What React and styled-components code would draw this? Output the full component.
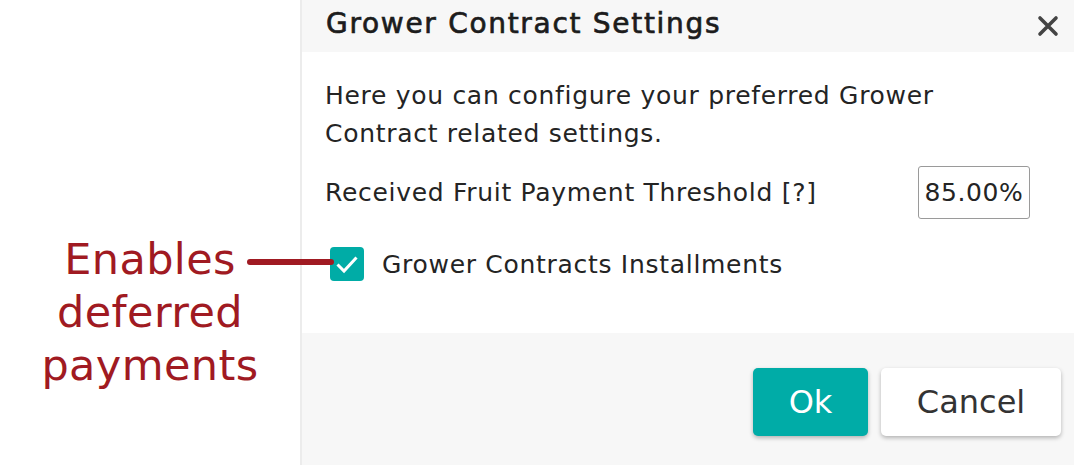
import React, { useState } from 'react'
import styled, { createGlobalStyle } from 'styled-components'

const GlobalStyle = createGlobalStyle`
  *, *::before, *::after {
    box-sizing: border-box;
  }
  html, body {
    margin: 0;
    padding: 0;
    background: #ffffff;
  }
  body {
    font-family: "DejaVu Sans", "Noto Sans", sans-serif;
  }
`

const Page = styled.div`
  display: flex;
  width: 1086px;
  height: 476px;
  overflow: hidden;
`

const Note = styled.aside`
  position: relative;
  width: 300px;
  flex: none;
  padding-top: 233px;
  text-align: center;
  color: #a01a22;
  font-size: 43px;
  letter-spacing: 0.4px;
  line-height: 53px;
`

const Pointer = styled.span`
  position: absolute;
  left: 247px;
  top: 259px;
  width: 87px;
  height: 6px;
  border-radius: 3px;
  background: #a01a22;
  z-index: 2;
`

const Dialog = styled.section`
  display: flex;
  flex-direction: column;
  width: 774px;
  height: 465px;
  border-left: 2px solid #ececec;
`

const Header = styled.header`
  display: flex;
  align-items: center;
  justify-content: space-between;
  height: 52px;
  padding: 0 14px 0 24px;
  background: #f7f7f7;
`

const Title = styled.h1`
  margin: 0;
  font-size: 28px;
  font-weight: 400;
  letter-spacing: 1.7px;
  -webkit-text-stroke: 0.7px #1c1c1c;
  color: #1c1c1c;
  transform: translateY(-3px);
`

const Close = styled.button`
  display: flex;
  padding: 0;
  border: none;
  background: transparent;
  color: #444;
  cursor: pointer;
`

const Body = styled.div`
  display: flex;
  flex-direction: column;
  height: 281px;
  padding: 25px 44px 0 23px;
  background: #ffffff;
  color: #242424;
  font-size: 25px;
  letter-spacing: 0.7px;
`

const Intro = styled.p`
  margin: 0 0 13px;
  width: 640px;
  line-height: 38px;
`

const Row = styled.div`
  display: flex;
  align-items: center;
  justify-content: space-between;
`

const Field = styled.input`
  width: 112px;
  height: 53px;
  padding: 0 2px;
  border: 1px solid #9a9a9a;
  border-radius: 3px;
  font: inherit;
  letter-spacing: 0.6px;
  color: #242424;
  text-align: center;
`

const Check = styled.label`
  display: flex;
  align-items: center;
  gap: 18px;
  margin-top: 28px;
  padding-left: 5px;
  cursor: pointer;
`

const Box = styled.span`
  display: flex;
  align-items: center;
  justify-content: center;
  width: 34px;
  height: 34px;
  border-radius: 4px;
  background: ${p => (p.$on ? '#00aca6' : '#ffffff')};
  border: ${p => (p.$on ? 'none' : '2px solid #aaa')};
`

const Footer = styled.footer`
  display: flex;
  align-items: center;
  justify-content: flex-end;
  gap: 13px;
  flex: 1;
  padding: 5px 13px 0 0;
  background: #f7f7f7;
`

const Button = styled.button`
  height: 68px;
  width: ${p => p.$w}px;
  border: none;
  border-radius: 5px;
  font-family: inherit;
  font-size: 32px;
  color: ${p => (p.$primary ? '#ffffff' : '#333333')};
  background: ${p => (p.$primary ? '#00aca7' : '#ffffff')};
  box-shadow: 0 2px 4px rgba(0, 0, 0, 0.28);
  cursor: pointer;
`

export default function App() {
  const [installments, setInstallments] = useState(true)

  return (
    <>
      <GlobalStyle />
      <Page>
        <Note>
          Enables<br />deferred<br />payments
          <Pointer />
        </Note>
        <Dialog>
          <Header>
            <Title>Grower Contract Settings</Title>
            <Close aria-label="close">
              <svg width="24" height="24" viewBox="0 0 24 24">
                <path d="M4 4 L20 20 M20 4 L4 20" stroke="currentColor" strokeWidth="3.6" strokeLinecap="round" />
              </svg>
            </Close>
          </Header>
          <Body>
            <Intro>Here you can configure your preferred Grower Contract related settings.</Intro>
            <Row>
              <span>Received Fruit Payment Threshold [?]</span>
              <Field defaultValue="85.00%" />
            </Row>
            <Check onClick={() => setInstallments(!installments)}>
              <Box $on={installments}>
                {installments && (
                  <svg width="28" height="28" viewBox="0 0 28 28">
                    <path d="M4.5 14.5 L11 21 L23.5 7.5" fill="none" stroke="#ffffff" strokeWidth="3" />
                  </svg>
                )}
              </Box>
              <span>Grower Contracts Installments</span>
            </Check>
          </Body>
          <Footer>
            <Button $primary $w={115}>Ok</Button>
            <Button $w={180}>Cancel</Button>
          </Footer>
        </Dialog>
      </Page>
    </>
  )
}
